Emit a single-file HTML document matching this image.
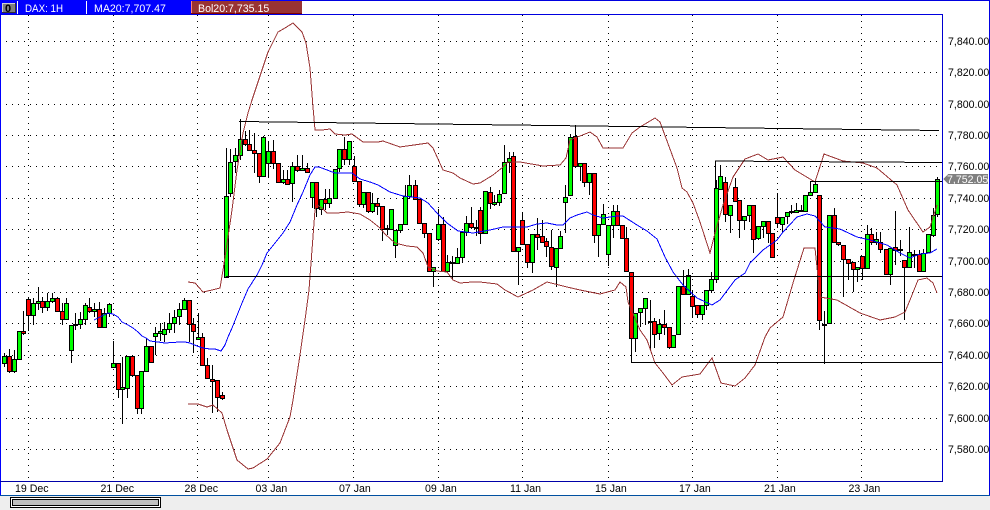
<!DOCTYPE html>
<html><head><meta charset="utf-8"><style>
html,body{margin:0;padding:0;background:#fff;width:990px;height:510px;overflow:hidden}
svg{display:block;position:absolute;left:0;top:0}
text{font-family:"Liberation Sans",sans-serif;font-size:10.6px;fill:#000}
</style></head><body>
<svg width="990" height="510" viewBox="0 0 990 510" xmlns="http://www.w3.org/2000/svg">
<rect width="990" height="510" fill="#fff"/>
<!-- grid -->
<g stroke="#000" stroke-width="1" stroke-dasharray="1 5" shape-rendering="crispEdges" fill="none">
<path d="M6 41.5H940M6 72.5H940M6 104.5H940M6 135.5H940M6 166.5H940M6 198.5H940M6 229.5H940M6 261.5H940M6 292.5H940M6 323.5H940M6 355.5H940M6 386.5H940M6 418.5H940M6 449.5H940"/>
<path d="M28.5 15V480M113.5 15V480M197.5 15V480M268.5 15V480M353.5 15V480M438.5 15V480M522.5 15V480M608.5 15V480M692.5 15V480M777.5 15V480M861.5 15V480"/>
</g>
<!-- wicks -->
<path fill="none" stroke="#000" shape-rendering="crispEdges" d="M4.5 353V367M9.5 349V373M14.5 350V373M19.5 331V359M23.5 311V335M28.5 297V331M33.5 298V325M38.5 287V310M42.5 297V313M47.5 293V311M52.5 293V303M57.5 297V311M62.5 303V325M66.5 298V320M71.5 325V363M75.5 313V330M80.5 312V329M85.5 303V325M89.5 298V313M94.5 303V317M99.5 302V327M104.5 308V325M109.5 303V317M113.5 341V367M118.5 363V398M122.5 357V424M127.5 356V398M132.5 356V377M137.5 375V414M141.5 371V414M146.5 338V371M151.5 346V362M155.5 327V355M160.5 323V341M164.5 322V342M169.5 313V333M174.5 310V333M179.5 303V325M184.5 298V309M189.5 300V342M193.5 318V353M198.5 313V339M202.5 333V365M207.5 358V378M212.5 365V413M217.5 380V412M222.5 392V400M226.5 148V277M230.5 149V197M235.5 148V173M240.5 119V160M245.5 131V146M249.5 130V150M254.5 133V173M259.5 153V183M263.5 136V176M268.5 141V177M273.5 140V169M278.5 163V182M283.5 170V184M287.5 170V185M292.5 162V202M297.5 155V172M302.5 155V170M307.5 163V173M312.5 182V208M316.5 182V217M321.5 199V215M325.5 189V210M329.5 189V208M335.5 169V198M339.5 149V172M344.5 137V165M349.5 141V165M354.5 156V181M359.5 181V207M363.5 192V208M368.5 192V213M372.5 193V213M377.5 198V215M382.5 206V241M387.5 225V235M391.5 209V229M395.5 230V258M400.5 224V233M405.5 185V224M409.5 175V199M415.5 180V199M419.5 199V223M424.5 223V238M429.5 233V271M433.5 267V287M438.5 209V241M443.5 217V271M447.5 255V271M452.5 256V280M457.5 248V264M462.5 232V263M466.5 216V236M471.5 207V229M476.5 220V236M480.5 207V244M485.5 191V233M490.5 187V209M494.5 195V206M499.5 190V206M504.5 145V193M509.5 152V173M513.5 152V251M518.5 247V285M522.5 212V244M527.5 244V268M532.5 234V273M537.5 218V250M542.5 220V243M546.5 238V257M551.5 230V270M556.5 248V287M560.5 231V248M565.5 185V233M570.5 134V195M575.5 125V168M580.5 163V181M584.5 163V187M589.5 173V195M594.5 173V243M598.5 224V257M603.5 204V224M608.5 225V266M613.5 205V238M617.5 205V225M622.5 225V238M626.5 227V271M631.5 272V362M635.5 313V352M640.5 308V327M645.5 298V325M650.5 300V350M654.5 318V348M659.5 319V340M664.5 310V335M669.5 327V349M673.5 335V348M678.5 286V335M683.5 270V294M688.5 269V294M692.5 290V318M697.5 305V318M702.5 305V320M706.5 290V310M711.5 272V293M716.5 180V283M720.5 165V189M725.5 177V222M730.5 205V233M735.5 178V201M739.5 200V238M744.5 216V230M749.5 205V222M753.5 205V253M758.5 226V240M763.5 221V238M768.5 221V243M772.5 233V257M777.5 193V228M782.5 217V232M787.5 212V224M791.5 205V214M796.5 203V212M801.5 205V212M805.5 195V211M810.5 181V195M815.5 181V192M819.5 195V330M824.5 311V364M829.5 215V323M834.5 208V242M838.5 242V246M843.5 245V297M848.5 259V280M853.5 262V292M857.5 267V282M862.5 256V280M867.5 225V268M871.5 228V245M876.5 232V245M880.5 232V253M886.5 249V274M890.5 248V285M895.5 211V265M900.5 240V256M904.5 260V320M909.5 227V267M914.5 250V268M919.5 250V271M923.5 249V271M928.5 234V252M933.5 208V237M937.5 177V217"/>
<!-- green bodies -->
<path fill="#00ff00" stroke="#000" shape-rendering="crispEdges" d="M2.5 356.5h4V363.5h-4zM12.5 359.5h4V371.5h-4zM17.5 331.5h4V359.5h-4zM31.5 303.5h4V315.5h-4zM36.5 301.5h4V303.5h-4zM45.5 301.5h4V307.5h-4zM50.5 298.5h4V301.5h-4zM64.5 303.5h4V319.5h-4zM69.5 325.5h4V350.5h-4zM73.5 324.5h4V325.5h-4zM78.5 319.5h4V324.5h-4zM83.5 305.5h4V319.5h-4zM92.5 309.5h4V311.5h-4zM102.5 313.5h4V327.5h-4zM107.5 304.5h4V313.5h-4zM111.5 363.5h4V367.5h-4zM120.5 387.5h4V389.5h-4zM125.5 356.5h4V388.5h-4zM139.5 371.5h4V408.5h-4zM144.5 346.5h4V371.5h-4zM153.5 333.5h4V336.5h-4zM158.5 331.5h4V333.5h-4zM162.5 329.5h4V334.5h-4zM167.5 323.5h4V329.5h-4zM172.5 317.5h4V323.5h-4zM177.5 309.5h4V316.5h-4zM182.5 300.5h4V309.5h-4zM196.5 337.5h4V339.5h-4zM224.5 196.5h4V277.5h-4zM228.5 162.5h4V193.5h-4zM233.5 155.5h4V161.5h-4zM238.5 139.5h4V155.5h-4zM261.5 137.5h4V176.5h-4zM266.5 151.5h4V163.5h-4zM281.5 179.5h4V182.5h-4zM290.5 166.5h4V183.5h-4zM300.5 168.5h4V170.5h-4zM310.5 182.5h4V197.5h-4zM319.5 199.5h4V209.5h-4zM327.5 198.5h4V203.5h-4zM333.5 169.5h4V198.5h-4zM337.5 149.5h4V168.5h-4zM347.5 141.5h4V159.5h-4zM361.5 192.5h4V204.5h-4zM370.5 203.5h4V211.5h-4zM385.5 228.5h4V229.5h-4zM389.5 209.5h4V229.5h-4zM393.5 230.5h4V245.5h-4zM398.5 224.5h4V230.5h-4zM403.5 196.5h4V224.5h-4zM407.5 185.5h4V196.5h-4zM431.5 267.5h4V271.5h-4zM436.5 224.5h4V239.5h-4zM445.5 262.5h4V271.5h-4zM450.5 262.5h4V263.5h-4zM455.5 257.5h4V263.5h-4zM460.5 232.5h4V257.5h-4zM464.5 223.5h4V232.5h-4zM483.5 191.5h4V233.5h-4zM492.5 202.5h4V204.5h-4zM497.5 194.5h4V202.5h-4zM502.5 162.5h4V193.5h-4zM507.5 158.5h4V162.5h-4zM516.5 247.5h4V251.5h-4zM530.5 234.5h4V262.5h-4zM554.5 248.5h4V267.5h-4zM558.5 236.5h4V248.5h-4zM563.5 197.5h4V202.5h-4zM568.5 137.5h4V195.5h-4zM578.5 163.5h4V166.5h-4zM587.5 173.5h4V182.5h-4zM596.5 224.5h4V235.5h-4zM601.5 214.5h4V224.5h-4zM606.5 225.5h4V254.5h-4zM611.5 211.5h4V225.5h-4zM633.5 313.5h4V338.5h-4zM638.5 308.5h4V312.5h-4zM643.5 298.5h4V308.5h-4zM657.5 324.5h4V333.5h-4zM671.5 335.5h4V347.5h-4zM676.5 286.5h4V334.5h-4zM686.5 275.5h4V294.5h-4zM700.5 305.5h4V314.5h-4zM704.5 290.5h4V305.5h-4zM709.5 279.5h4V290.5h-4zM714.5 188.5h4V279.5h-4zM718.5 176.5h4V189.5h-4zM728.5 205.5h4V215.5h-4zM742.5 216.5h4V220.5h-4zM747.5 205.5h4V215.5h-4zM756.5 226.5h4V238.5h-4zM761.5 221.5h4V226.5h-4zM780.5 217.5h4V224.5h-4zM785.5 212.5h4V216.5h-4zM794.5 210.5h4V212.5h-4zM799.5 210.5h4V211.5h-4zM803.5 195.5h4V211.5h-4zM808.5 192.5h4V195.5h-4zM813.5 184.5h4V192.5h-4zM827.5 215.5h4V323.5h-4zM855.5 267.5h4V269.5h-4zM865.5 234.5h4V268.5h-4zM874.5 239.5h4V242.5h-4zM888.5 248.5h4V274.5h-4zM907.5 252.5h4V267.5h-4zM912.5 254.5h4V255.5h-4zM921.5 253.5h4V271.5h-4zM926.5 234.5h4V252.5h-4zM931.5 215.5h4V235.5h-4zM935.5 179.5h4V214.5h-4z"/>
<!-- red bodies -->
<path fill="#ff0000" stroke="#000" shape-rendering="crispEdges" d="M7.5 356.5h4V371.5h-4zM21.5 331.5h4V333.5h-4zM26.5 299.5h4V315.5h-4zM40.5 301.5h4V307.5h-4zM55.5 298.5h4V311.5h-4zM60.5 311.5h4V319.5h-4zM87.5 307.5h4V311.5h-4zM97.5 309.5h4V327.5h-4zM116.5 363.5h4V389.5h-4zM130.5 356.5h4V375.5h-4zM135.5 375.5h4V408.5h-4zM149.5 346.5h4V362.5h-4zM187.5 300.5h4V324.5h-4zM191.5 324.5h4V331.5h-4zM200.5 337.5h4V365.5h-4zM205.5 365.5h4V378.5h-4zM210.5 379.5h4V381.5h-4zM215.5 380.5h4V397.5h-4zM220.5 395.5h4V398.5h-4zM243.5 139.5h4V144.5h-4zM247.5 144.5h4V150.5h-4zM252.5 150.5h4V153.5h-4zM257.5 153.5h4V176.5h-4zM271.5 151.5h4V163.5h-4zM276.5 163.5h4V182.5h-4zM285.5 179.5h4V184.5h-4zM295.5 166.5h4V170.5h-4zM305.5 168.5h4V172.5h-4zM314.5 182.5h4V208.5h-4zM323.5 199.5h4V203.5h-4zM342.5 149.5h4V159.5h-4zM352.5 166.5h4V181.5h-4zM357.5 181.5h4V204.5h-4zM366.5 192.5h4V211.5h-4zM375.5 203.5h4V206.5h-4zM380.5 206.5h4V229.5h-4zM413.5 185.5h4V199.5h-4zM417.5 199.5h4V223.5h-4zM422.5 223.5h4V233.5h-4zM427.5 233.5h4V271.5h-4zM441.5 224.5h4V271.5h-4zM469.5 223.5h4V227.5h-4zM474.5 227.5h4V228.5h-4zM478.5 210.5h4V233.5h-4zM488.5 192.5h4V203.5h-4zM511.5 156.5h4V251.5h-4zM520.5 220.5h4V244.5h-4zM525.5 244.5h4V262.5h-4zM535.5 234.5h4V237.5h-4zM540.5 236.5h4V242.5h-4zM544.5 241.5h4V246.5h-4zM549.5 247.5h4V266.5h-4zM573.5 136.5h4V166.5h-4zM582.5 163.5h4V182.5h-4zM592.5 173.5h4V235.5h-4zM615.5 211.5h4V225.5h-4zM620.5 225.5h4V238.5h-4zM624.5 238.5h4V271.5h-4zM629.5 272.5h4V338.5h-4zM648.5 321.5h4V322.5h-4zM652.5 321.5h4V334.5h-4zM662.5 324.5h4V327.5h-4zM667.5 327.5h4V347.5h-4zM681.5 286.5h4V294.5h-4zM690.5 296.5h4V306.5h-4zM695.5 305.5h4V314.5h-4zM723.5 182.5h4V214.5h-4zM733.5 187.5h4V201.5h-4zM737.5 200.5h4V220.5h-4zM751.5 205.5h4V239.5h-4zM766.5 221.5h4V233.5h-4zM770.5 233.5h4V257.5h-4zM775.5 217.5h4V223.5h-4zM789.5 211.5h4V212.5h-4zM817.5 195.5h4V320.5h-4zM822.5 324.5h4V325.5h-4zM832.5 215.5h4V242.5h-4zM836.5 242.5h4V244.5h-4zM841.5 245.5h4V259.5h-4zM846.5 259.5h4V263.5h-4zM851.5 262.5h4V269.5h-4zM860.5 256.5h4V268.5h-4zM869.5 234.5h4V242.5h-4zM878.5 242.5h4V249.5h-4zM884.5 249.5h4V274.5h-4zM893.5 247.5h4V250.5h-4zM898.5 249.5h4V250.5h-4zM902.5 260.5h4V267.5h-4zM917.5 254.5h4V271.5h-4z"/>
<!-- bollinger -->
<g fill="none" stroke="#993333" stroke-width="1" shape-rendering="crispEdges">
<polyline points="188,282 195,283 203,292 212,290 220,288 223,270 228,237 232,210 237,170 243,133 248,113 252,100 258,82 268,52 278,32 285,28 293,23 302,32 306,43 310,68 313,107 315,130 322,130 330,129 335,134 345,135 352,134 363,142 378,142 383,141 400,147 428,143 433,148 443,170 453,173 460,178 473,184 480,183 493,175 503,167 508,162 520,162 543,166 560,165 566,158 570,140 575,138 590,132 597,137 603,148 623,148 632,133 640,127 655,118 660,122 677,168 682,188 687,192 693,203 700,222 710,253 715,233 723,205 733,177 745,159 758,154 768,160 783,157 795,170 815,182 824,154 843,161 863,163 877,168 897,185 908,210 923,232 930,227 937,205"/>
<polyline points="188,404 198,404 207,407 213,405 222,413 227,430 237,460 248,469 253,468 267,459 280,443 290,417 293,400 300,355 305,320 309,290 315,210 317,205 322,208 327,213 337,213 348,212 360,214 370,220 380,228 385,234 395,243 407,246 417,247 423,253 428,267 437,271 447,272 453,280 460,283 472,282 480,282 497,284 505,290 518,297 533,290 547,282 567,287 580,290 600,294 615,290 620,282 626,287 628,302 640,330 647,340 655,363 663,373 672,385 682,377 700,374 712,358 721,383 735,386 745,378 755,365 765,337 770,328 783,317 793,283 804,248 815,248 820,297 837,300 860,313 880,320 895,317 905,312 910,300 918,280 927,278 933,283 937,293"/>
</g>
<!-- MA -->
<polyline fill="none" stroke="#0000ff" stroke-width="1" shape-rendering="crispEdges" points="94,320 100,317 108,313 113,314 118,317 122,322 128,325 133,328 138,332 142,336 146,338 150,341 158,342 165,343 180,342 185,342 190,343 197,346 203,348 210,349 215,349 221,351 225,345 228,337 232,328 238,313 242,303 248,289 257,275 262,265 267,253 275,243 283,233 290,222 297,205 303,192 310,175 315,167 319,167 327,170 335,173 352,173 360,179 370,182 378,185 390,192 403,196 420,198 428,203 437,213 447,223 458,231 473,233 490,230 503,227 510,227 527,227 537,224 547,223 557,225 563,225 570,218 577,215 587,212 593,215 603,218 617,216 623,216 637,225 647,231 657,239 665,257 673,272 683,285 697,298 712,305 720,300 735,280 745,273 750,263 763,250 777,240 783,232 797,217 807,214 815,216 825,227 840,229 857,237 870,240 887,245 900,253 910,258 920,254 930,253 937,249"/>
<!-- trendlines -->
<g fill="none" stroke="#000" shape-rendering="crispEdges">
<path d="M239 121.5L939 130.5"/>
<path d="M226 276.5H942"/>
<path d="M715.5 188V161M715 161L942 162.5"/>
<path d="M810 181.5H942"/>
<path d="M631 362.5H942"/>
</g>
<!-- frame -->
<g shape-rendering="crispEdges">
<rect x="942" y="14" width="48" height="481" fill="#fff"/>
<rect x="0" y="482" width="990" height="13" fill="#fff"/>
<rect x="0" y="0" width="990" height="1" fill="#0000e0"/>
<rect x="0" y="0" width="1" height="496" fill="#0000ff"/>
<rect x="0" y="14" width="942" height="1" fill="#0000e0"/>
<rect x="942" y="14" width="1" height="468" fill="#0000d0"/>
<rect x="989" y="0" width="1" height="495" fill="#0000e0"/>
<rect x="0" y="481" width="943" height="1" fill="#0000a8"/>
<rect x="0" y="495" width="990" height="1" fill="#0050a0"/>
<rect x="0" y="496" width="990" height="14" fill="#eeeeee"/>
<!-- scrollbar -->
<rect x="10.5" y="497.5" width="150" height="10" fill="#fff" stroke="#000"/>
<rect x="12.5" y="499.5" width="146" height="6" fill="#c0c0c0" stroke="#000"/>
<!-- top bar -->
<rect x="0" y="0" width="191" height="14" fill="#0000ff"/>
<rect x="191" y="0" width="111" height="1" fill="#0000ff"/>
<rect x="191" y="1" width="1" height="13" fill="#ff8080"/>
<rect x="192" y="1" width="110" height="13" fill="#993333"/>
<rect x="191" y="13" width="111" height="1" fill="#800000"/>
<rect x="17" y="1" width="1" height="13" fill="#fff"/>
<rect x="86" y="1" width="1" height="13" fill="#fff"/>
<rect x="2" y="3" width="14" height="10" fill="#808080"/>
<rect x="2" y="3" width="14" height="1" fill="#d0d0d0"/>
<rect x="2" y="3" width="1" height="10" fill="#d0d0d0"/>
<rect x="15" y="3" width="1" height="10" fill="#303030"/>
<rect x="2" y="12" width="14" height="1" fill="#303030"/>
<!-- price tag -->
<polygon points="943,179 948,174 988,174 988,184 948,184" fill="#808080"/>
</g>
<text x="5" y="12" style="font-weight:bold;font-size:11px">0</text>
<text x="25" y="12" textLength="38" lengthAdjust="spacingAndGlyphs" style="fill:#fff">DAX: 1H</text>
<text x="94" y="12" style="fill:#fff">MA20:7,707.47</text>
<text x="198" y="12" style="fill:#fff">Bol20:7,735.15</text>
<text x="947" y="183" style="fill:#fff">7,752.05</text>
<!-- axis labels -->
<text x="948" y="45">7,840.00</text>
<text x="948" y="76">7,820.00</text>
<text x="948" y="108">7,800.00</text>
<text x="948" y="139">7,780.00</text>
<text x="948" y="170">7,760.00</text>
<text x="948" y="202">7,740.00</text>
<text x="948" y="233">7,720.00</text>
<text x="948" y="265">7,700.00</text>
<text x="948" y="296">7,680.00</text>
<text x="948" y="327">7,660.00</text>
<text x="948" y="359">7,640.00</text>
<text x="948" y="390">7,620.00</text>
<text x="948" y="422">7,600.00</text>
<text x="948" y="453">7,580.00</text>
<text x="15" y="492">19 Dec</text>
<text x="100.5" y="492">21 Dec</text>
<text x="184.5" y="492">28 Dec</text>
<text x="255.5" y="492">03 Jan</text>
<text x="339" y="492">07 Jan</text>
<text x="425" y="492">09 Jan</text>
<text x="510" y="492">11 Jan</text>
<text x="595" y="492">15 Jan</text>
<text x="679" y="492">17 Jan</text>
<text x="764" y="492">21 Jan</text>
<text x="848.5" y="492">23 Jan</text>
</svg>
</body></html>
